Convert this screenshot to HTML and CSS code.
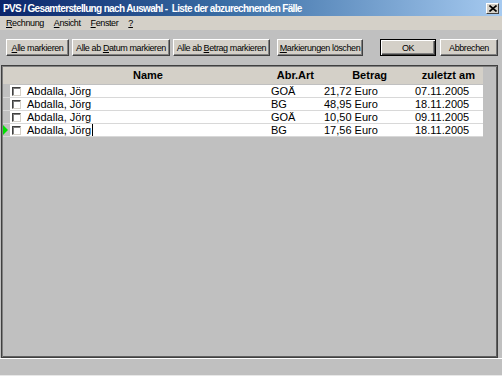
FILE: index.html
```html
<!DOCTYPE html>
<html lang="de">
<head>
  <meta charset="UTF-8" />
  <title>PVS / Gesamterstellung nach Auswahl</title>
  <link rel="stylesheet" href="styles.css">
</head>
<body>
  <div class="window">
    <div class="titlebar">
      <span class="title">PVS / Gesamterstellung nach Auswahl -&nbsp; Liste der abzurechnenden Fälle</span>
      <span class="close">
        <svg width="8" height="7" viewBox="0 0 8 7"><path d="M0.5 0.5 L7.5 6.5 M7.5 0.5 L0.5 6.5" stroke="#000" stroke-width="1.6"/></svg>
      </span>
    </div>

    <div class="menubar">
      <span><u>R</u>echnung</span>
      <span><u>A</u>nsicht</span>
      <span><u>F</u>enster</span>
      <span><u>?</u></span>
    </div>

    <div class="toolbar">
      <button class="btn btn-all"><u>A</u>lle markieren</button>
      <button class="btn btn-date">Alle ab <u>D</u>atum markieren</button>
      <button class="btn btn-amount">Alle ab <u>B</u>etrag markieren</button>
      <button class="btn btn-clear"><u>M</u>arkierungen löschen</button>
      <button class="btn btn-ok">OK</button>
      <button class="btn btn-cancel">Abbrechen</button>
    </div>

    <div class="grid-frame">
      <div class="grid">
        <div class="row head">
          <div class="ind"></div>
          <div class="c-name">Name</div>
          <div class="c-art">Abr.Art</div>
          <div class="c-sum">Betrag</div>
          <div class="c-date">zuletzt am</div>
        </div>
        <div class="row">
          <div class="ind"></div>
          <div class="c-name"><span class="check"></span>Abdalla, Jörg</div>
          <div class="c-art">GOÄ</div>
          <div class="c-sum">21,72 Euro</div>
          <div class="c-date">07.11.2005</div>
        </div>
        <div class="row">
          <div class="ind"></div>
          <div class="c-name"><span class="check"></span>Abdalla, Jörg</div>
          <div class="c-art">BG</div>
          <div class="c-sum">48,95 Euro</div>
          <div class="c-date">18.11.2005</div>
        </div>
        <div class="row">
          <div class="ind"></div>
          <div class="c-name"><span class="check"></span>Abdalla, Jörg</div>
          <div class="c-art">GOÄ</div>
          <div class="c-sum">10,50 Euro</div>
          <div class="c-date">09.11.2005</div>
        </div>
        <div class="row current">
          <div class="ind"><span class="arrow"></span></div>
          <div class="c-name"><span class="check"></span>Abdalla, Jörg<span class="caret"></span></div>
          <div class="c-art">BG</div>
          <div class="c-sum">17,56 Euro</div>
          <div class="c-date">18.11.2005</div>
        </div>
      </div>
    </div>

    <div class="statusbar"></div>
  </div>
</body>
</html>
```

FILE: styles.css
```css
* {
  margin: 0;
  padding: 0;
  box-sizing: border-box;
}

body {
  width: 502px;
  height: 376px;
  overflow: hidden;
  background: #c0c0c0;
  font-family: 'Liberation Sans', Arial, sans-serif;
  color: #000;
}

.window {
  width: 502px;
  height: 376px;
  display: flex;
  flex-direction: column;
}

/* title bar */
.titlebar {
  height: 16px;
  flex: none;
  display: flex;
  align-items: center;
  justify-content: space-between;
  padding-left: 3px;
  padding-right: 3px;
  background: linear-gradient(to right, #0a246a 0%, #3a6ea5 45%, #a6caf0 100%);
}

.title {
  color: #fff;
  font-weight: bold;
  font-size: 10px;
  letter-spacing: -0.65px;
  white-space: nowrap;
}

.close {
  width: 13px;
  height: 11px;
  background: #d4d0c8;
  border: 1px solid;
  border-color: #fff #404040 #404040 #fff;
  display: flex;
  align-items: center;
  justify-content: center;
}

/* menu */
.menubar {
  height: 14px;
  flex: none;
  background: #d4d0c8;
  display: flex;
  align-items: center;
  gap: 10px;
  padding-left: 6px;
  font-size: 9px;
  letter-spacing: -0.4px;
}

/* buttons */
.toolbar {
  flex: none;
  display: flex;
  align-items: center;
  padding: 9px 0 9px 6px;
}

.btn {
  height: 17px;
  background: #d4d0c8;
  border: 1px solid;
  border-color: #fff #404040 #404040 #fff;
  box-shadow: inset -1px -1px 0 #808080;
  font-family: 'Liberation Sans', Arial, sans-serif;
  font-size: 9px;
  letter-spacing: -0.4px;
  color: #000;
  padding: 0;
}

.btn-all { width: 63px; }
.btn-date { width: 98px; margin-left: 3px; }
.btn-amount { width: 97px; margin-left: 3px; }
.btn-clear { width: 86px; margin-left: 7px; }
.btn-ok {
  width: 56px;
  margin-left: 17px;
  border: 1px solid #000;
  box-shadow: inset 1px 1px 0 #fff, inset -1px -1px 0 #404040, inset -2px -2px 0 #808080;
}
.btn-cancel { width: 58px; margin-left: 4px; }

/* grid */
.grid-frame {
  height: 293px;
  flex: none;
  margin: 0 4px 0 1px;
  padding: 1px;
  border: 1px solid #404040;
  box-shadow: inset 1px 1px 0 #808080, inset -1px -1px 0 #606060;
  background: #c0c0c0;
}

.grid {
  width: 480px;
}

.row {
  display: flex;
  height: 13px;
  font-size: 11px;
  line-height: 12px;
  background: #fff;
  border-bottom: 1px solid #d8d8d8;
}

.row .ind {
  width: 7px;
  flex: none;
  background: #c0c0c0;
  position: relative;
}

.row.head {
  height: 18px;
  line-height: 17px;
  background: #d4d0c8;
  border-bottom: 1px solid #c0c0c0;
  font-weight: bold;
}

.row.head .ind {
  background: #d4d0c8;
}

.c-name {
  width: 258px;
  display: flex;
  align-items: center;
  padding-left: 2px;
  white-space: nowrap;
}
.c-art { width: 50px; padding-left: 3px; }
.c-sum { width: 72px; padding-left: 6px; }
.c-date { width: 93px; padding-left: 25px; }

.head .c-name { justify-content: center; padding-left: 18px; }
.head .c-art { text-align: right; padding-right: 4px; }
.head .c-sum { text-align: right; padding-right: 3px; }
.head .c-date { text-align: right; padding-right: 8px; }

.check {
  width: 9px;
  height: 9px;
  flex: none;
  border: 1px solid;
  border-color: #404040 #d4d0c8 #d4d0c8 #404040;
  box-shadow: inset 1px 1px 0 #808080;
  background: #fff;
  margin-right: 6px;
}

.caret {
  width: 1px;
  height: 12px;
  background: #000;
  margin-left: 1px;
}

.arrow {
  position: absolute;
  left: 0;
  top: 1px;
  width: 0;
  height: 0;
  border-top: 5px solid transparent;
  border-bottom: 5px solid transparent;
  border-left: 5px solid #00e000;
}

/* status bar */
.statusbar {
  flex: 1;
  border-top: 1px solid #fff;
  border-bottom: 1px solid #e8e8e8;
  background: #c0c0c0;
}
```
